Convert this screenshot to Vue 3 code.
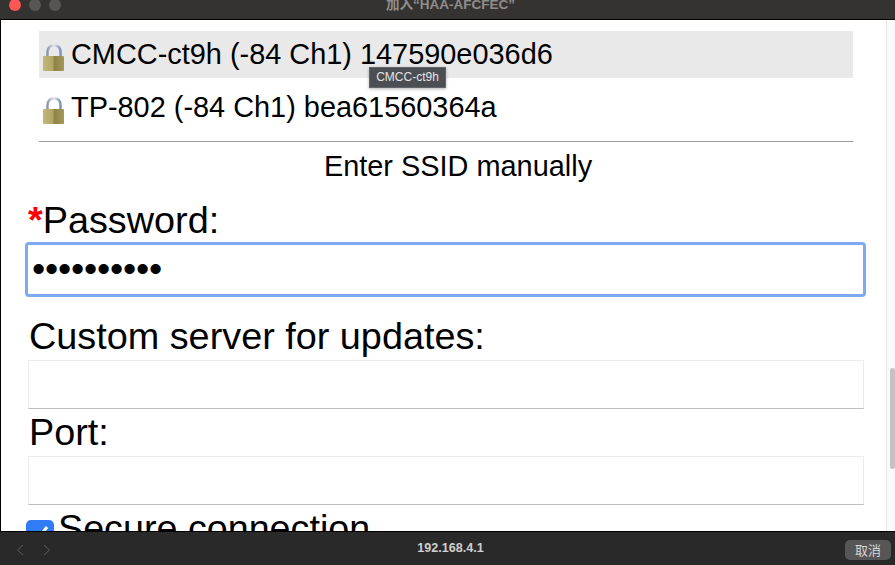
<template>
  <div class="window">
    <header class="titlebar">
      <div class="lights">
        <span class="light red"></span>
        <span class="light"></span>
        <span class="light"></span>
      </div>
      <div class="title">加入“HAA-AFCFEC”</div>
    </header>

    <div class="body">
      <main class="page">
        <div class="networks">
          <div
            v-for="(n, i) in networks"
            :key="n.ssid"
            class="network"
            :class="{ hover: i === 0 }">
            <svg class="lock" viewBox="0 0 21 27" width="21" height="27">
              <defs>
                <linearGradient id="shackle" x1="0" y1="0" x2="1" y2="0">
                  <stop offset="0" stop-color="#8d99a8" />
                  <stop offset="0.5" stop-color="#e4e8ee" />
                  <stop offset="1" stop-color="#7d93ba" />
                </linearGradient>
                <linearGradient id="brass" x1="0" y1="0" x2="1" y2="0">
                  <stop offset="0" stop-color="#c2b878" />
                  <stop offset="0.49" stop-color="#b0a566" />
                  <stop offset="0.51" stop-color="#8e8146" />
                  <stop offset="1" stop-color="#a4985a" />
                </linearGradient>
              </defs>
              <path d="M4.500 13V8.500C4.500 4 7 1.500 11 1.500S17.500 4 17.500 8.500V13" fill="none" stroke="url(#shackle)" stroke-width="2.600" />
              <rect x="0" y="12" width="21" height="15" rx="1" fill="url(#brass)" />
            </svg>
            <span>{{ n.ssid }} ({{ n.rssi }} {{ n.channel }}) {{ n.bssid }}</span>
            <div v-if="i === 0" class="tooltip">{{ n.ssid }}</div>
          </div>
        </div>
        <div class="manual">Enter SSID manually</div>

        <label class="field-label password-label"><span class="req">*</span>Password:</label>
        <input class="input focused" type="password" value="1234567890" readonly />

        <label class="field-label server-label">Custom server for updates:</label>
        <div class="input plain"></div>

        <label class="field-label port-label">Port:</label>
        <div class="input plain"></div>

        <div class="secure">
          <span class="check">
            <svg viewBox="0 0 28 28" width="28" height="28">
              <path d="M6 14l5 6 10-13" fill="none" stroke="#fff" stroke-width="3" />
            </svg>
          </span>
          <span class="secure-text">Secure connection</span>
        </div>
      </main>
      <aside class="scrolltrack">
        <div class="scrollthumb"></div>
      </aside>
    </div>

    <footer class="bottombar">
      <div class="nav">
        <svg viewBox="0 0 8 12" width="8" height="12"><path d="M7 1L1.500 6 7 11" fill="none" stroke="#5d5d5d" stroke-width="1" /></svg>
        <svg viewBox="0 0 8 12" width="8" height="12"><path d="M1 1l5.500 5L1 11" fill="none" stroke="#5d5d5d" stroke-width="1" /></svg>
      </div>
      <div class="address">192.168.4.1</div>
      <button class="cancel">取消</button>
    </footer>
  </div>
</template>

<script setup>
const networks = [
  { ssid: 'CMCC-ct9h', rssi: '-84', channel: 'Ch1', bssid: '147590e036d6' },
  { ssid: 'TP-802', rssi: '-84', channel: 'Ch1', bssid: 'bea61560364a' }
];
</script>

<style>
html, body {
  margin: 0;
  background: #000;
}
</style>

<style scoped>
.window {
  width: 895px;
  height: 565px;
  display: flex;
  flex-direction: column;
  overflow: hidden;
  font-family: "Liberation Sans", "Noto Sans CJK SC", sans-serif;
  color: #000;
  background: #fff;
}

.titlebar {
  flex: none;
  height: 19px;
  background: #353331;
  border-bottom: 1px solid #000;
  position: relative;
  overflow: hidden;
}

.lights {
  display: flex;
  gap: 8px;
  padding: 0 0 0 9px;
  margin-top: -1px;
}

.light {
  width: 12px;
  height: 12px;
  border-radius: 50%;
  background: #575654;
}

.light.red {
  background: #fc5753;
}

.title {
  position: absolute;
  top: -3px;
  left: 0;
  right: 0;
  padding-left: 6px;
  text-align: center;
  font-size: 13.500px;
  line-height: 16px;
  font-weight: 700;
  color: #8f8d8b;
}

.body {
  flex: 1;
  min-height: 0;
  display: flex;
  border-left: 1px solid #000;
}

.page {
  flex: 1;
  min-width: 0;
  padding: 11px 22px 0 27px;
  overflow: hidden;
}

.networks {
  margin: 0 11px;
  padding-bottom: 10px;
  border-bottom: 1px solid #9b9b9b;
}

.network {
  position: relative;
  height: 47px;
  margin-bottom: 6px;
  padding-left: 4px;
  display: flex;
  align-items: center;
  gap: 7px;
  font-size: 28.900px;
  white-space: nowrap;
}

.network:last-child {
  margin-bottom: 0;
}

.network.hover {
  background: #e9e9e9;
}

.lock {
  flex: none;
  margin-top: 5px;
}

.tooltip {
  position: absolute;
  left: 330px;
  top: 36px;
  width: 77px;
  height: 21px;
  box-sizing: border-box;
  border: 1px solid #62666a;
  background: #4b4f53;
  color: #e3e4e5;
  font-size: 12px;
  line-height: 19px;
  text-align: center;
  box-shadow: 0 1px 3px rgba(0, 0, 0, 0.3);
  z-index: 2;
}

.manual {
  margin-top: 7px;
  padding-left: 24px;
  text-align: center;
  font-size: 28.900px;
  line-height: 34px;
}

.field-label {
  display: block;
  font-size: 37.800px;
  line-height: 40px;
}

.password-label {
  margin-top: 17px;
  height: 44px;
}

.req {
  color: #f00;
  font-weight: 700;
}

.input {
  display: block;
  box-sizing: border-box;
  outline: none;
  background: #fff;
}

.focused {
  width: calc(100% + 5px);
  height: 55px;
  margin: -2px -2px -2px -3px;
  border: 3px solid #7fa9f0;
  border-radius: 4px;
  padding: 0 0 3px 4px;
  font-size: 37.700px;
  font-family: "Liberation Sans", sans-serif;
  letter-spacing: -0.200px;
  color: #000;
}

.plain {
  width: 100%;
  height: 49px;
  border: 1px solid #ececec;
  border-bottom: 1px solid #bfbfbf;
}

.server-label {
  margin-top: 21px;
  padding-left: 1px;
  height: 44px;
}

.port-label {
  padding-left: 1px;
  height: 47px;
  line-height: 47px;
}

.secure {
  margin-top: 3px;
  height: 40px;
  display: flex;
  gap: 4px;
  margin-left: -2px;
}

.check {
  width: 28px;
  height: 28px;
  margin-top: 12px;
  border-radius: 5px;
  background: #2f7cf6;
  flex: none;
}

.secure-text {
  font-size: 37.700px;
  line-height: 40px;
  white-space: nowrap;
}

.scrolltrack {
  flex: none;
  width: 9px;
  background: #fafafa;
  border-left: 1px solid #e8e8e8;
  padding: 348px 0 0 3px;
  box-sizing: border-box;
}

.scrollthumb {
  width: 5px;
  height: 101px;
  border-radius: 3px;
  background: #c2c2c2;
}

.bottombar {
  flex: none;
  height: 34px;
  box-sizing: border-box;
  border-top: 1px solid #000;
  background: #292929;
  display: flex;
  align-items: center;
  padding: 0 4px 0 16px;
  position: relative;
}

.nav {
  display: flex;
  gap: 19px;
  position: relative;
  top: 1px;
}

.address {
  position: absolute;
  left: 0;
  right: 0;
  top: 9px;
  text-align: center;
  padding-left: 6px;
  font-size: 12.600px;
  font-weight: 700;
  color: #cfcfcf;
}

.cancel {
  margin-left: auto;
  width: 46px;
  height: 20px;
  padding: 0;
  border: none;
  border-radius: 5px;
  background: #565656;
  color: #d6d6d6;
  font-size: 13px;
  font-family: "Noto Sans CJK SC", sans-serif;
  position: relative;
  top: 1px;
}
</style>
